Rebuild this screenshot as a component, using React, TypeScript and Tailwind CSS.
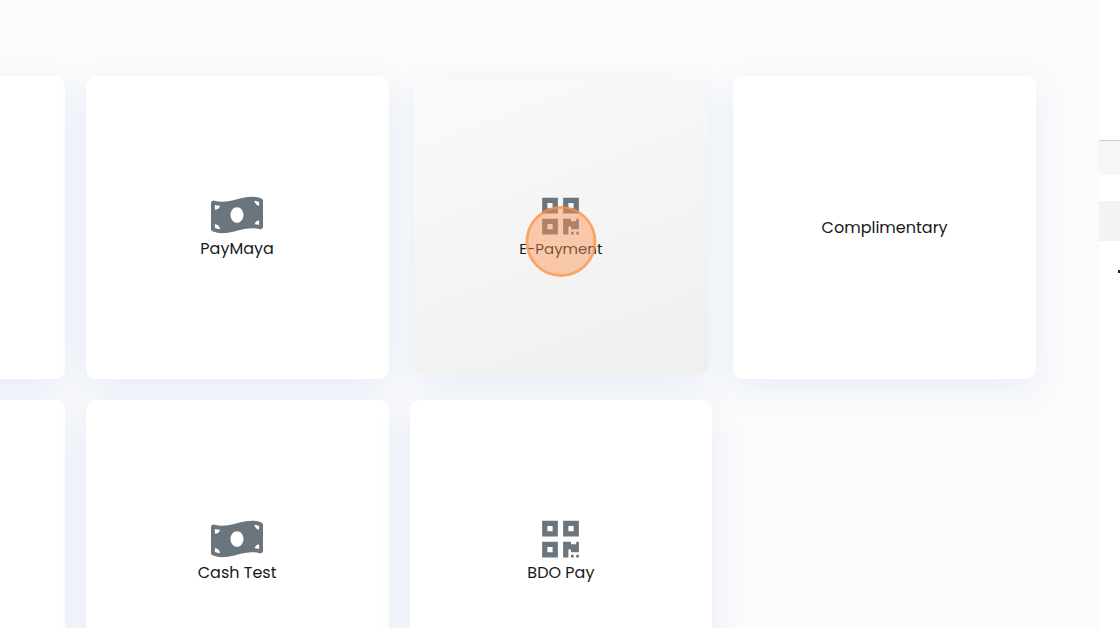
import type { ReactNode } from "react";
import { FaMoneyBillWave, FaQrcode } from "react-icons/fa";

type Method = {
  name: string;
  kind: "cash" | "qr" | "none";
  pressed?: boolean;
};

const methods: Method[] = [
  { name: "", kind: "none" },
  { name: "PayMaya", kind: "cash" },
  { name: "E-Payment", kind: "qr", pressed: true },
  { name: "Complimentary", kind: "none" },
  { name: "", kind: "none" },
  { name: "Cash Test", kind: "cash" },
  { name: "BDO Pay", kind: "qr" },
];

const icons: Record<Method["kind"], ReactNode> = {
  cash: <FaMoneyBillWave className="h-[42px] w-[52px] text-[#6b757e]" aria-hidden="true" />,
  qr: <FaQrcode className="h-[42px] w-[37px] text-[#6b757e]" aria-hidden="true" />,
  none: null,
};

function MethodCard({ name, kind, pressed }: Method) {
  const surface = pressed
    ? "m-1 bg-linear-160 from-[#fafafa] to-[#efefef] text-[15px] leading-[23px]"
    : "aspect-square bg-white text-base leading-[25px]";
  return (
    <button
      type="button"
      className={`flex items-center justify-center rounded-[10px] shadow-[0_10px_34px_rgba(80,140,230,0.12)] ${surface}`}
    >
      <span className="relative flex flex-col items-center">
        {icons[kind]}
        <span className="whitespace-nowrap">{name}</span>
        {pressed && (
          <span className="absolute top-[11px] left-1/2 size-[71px] -translate-x-1/2 rounded-full border-3 border-[#ff9040]/80 bg-[#ff9353]/45 bg-clip-padding" />
        )}
      </span>
    </button>
  );
}

export default function App() {
  return (
    <div className="flex h-screen overflow-hidden bg-white font-['Poppins','Inter',sans-serif] text-[#17191c]">
      <main className="min-w-0 flex-1 overflow-hidden border-t border-white bg-[#fbfbfb] pt-[75px] pr-[63px]">
        <div className="-ml-[238px] grid grid-cols-4 gap-[21px]">
          {methods.map((method, index) => (
            <MethodCard key={index} {...method} />
          ))}
        </div>
      </main>
      <aside className="w-[21px] shrink-0 overflow-hidden pt-[140px]">
        <div className="h-[35px] border-t border-[#cfcfd1] bg-[#f7f5f6]" />
        <div className="mt-[26px] h-10 bg-[#f2f3f5]" />
        <div className="mt-[29px] ml-auto h-[3px] w-0.5 bg-[#222222]" />
      </aside>
    </div>
  );
}
